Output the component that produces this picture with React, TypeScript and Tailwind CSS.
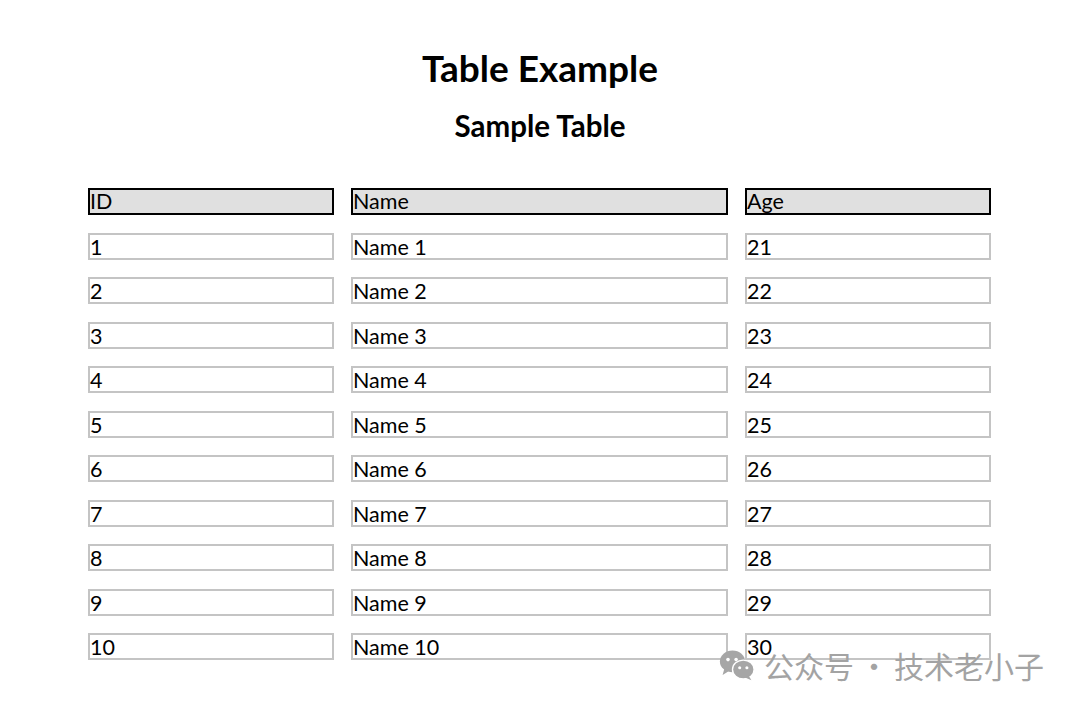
import React from "react";

const rows = Array.from({ length: 10 }, (_, i) => ({
  id: String(i + 1),
  name: `Name ${i + 1}`,
  age: String(21 + i),
}));

function WeChatIcon() {
  return (
    <svg width="36" height="34" viewBox="0 0 40 36" fill="none">
      <ellipse cx="15" cy="14" rx="14" ry="12" fill="#a6a6a6" />
      <path d="M6 22 L4 29 L12 24 Z" fill="#a6a6a6" />
      <circle cx="10" cy="12" r="2" fill="#fff" />
      <circle cx="19" cy="12" r="2" fill="#fff" />
      <ellipse cx="27" cy="23" rx="12" ry="10.5" fill="#a6a6a6" stroke="#fff" strokeWidth="1.5" />
      <path d="M33 30 L36 35 L29 32 Z" fill="#a6a6a6" />
      <circle cx="23" cy="21" r="1.7" fill="#fff" />
      <circle cx="31" cy="21" r="1.7" fill="#fff" />
    </svg>
  );
}

export default function App() {
  return (
    <div
      className="relative w-[1080px] h-[710px] bg-white text-black overflow-hidden"
      style={{ fontFamily: "Lato, 'Noto Sans', sans-serif" }}
    >
      <div className="flex flex-col items-center pt-[44px]">
        <h1 className="text-[37px] font-bold leading-[48px]">Table Example</h1>
        <h2 className="text-[29.5px] font-bold leading-[36px] mt-[16px]">Sample Table</h2>
      </div>
      <div className="ml-[88px] mt-[44px] w-[903px] grid grid-cols-[246px_377px_246px] gap-x-[17px] gap-y-[17.5px] text-[21.5px] leading-[23px]">
        <div className="h-[27px] border-2 border-black bg-[#e0e0e0]">ID</div>
        <div className="h-[27px] border-2 border-black bg-[#e0e0e0]">Name</div>
        <div className="h-[27px] border-2 border-black bg-[#e0e0e0]">Age</div>
        {rows.map((r) => (
          <React.Fragment key={r.id}>
            <div className="h-[27px] border-2 border-[#c4c4c4] pt-px">{r.id}</div>
            <div className="h-[27px] border-2 border-[#c4c4c4] pt-px">{r.name}</div>
            <div className="h-[27px] border-2 border-[#c4c4c4] pt-px">{r.age}</div>
          </React.Fragment>
        ))}
      </div>
      <div
        className="absolute left-[719px] top-[647px] flex items-center text-[#a3a3a3] text-[30px] leading-[36px]"
        style={{ fontFamily: "'Noto Sans CJK SC', sans-serif" }}
      >
        <WeChatIcon />
        <span className="ml-[9px]">公众号</span>
        <span className="mx-[5px]">·</span>
        <span>技术老小子</span>
      </div>
    </div>
  );
}
